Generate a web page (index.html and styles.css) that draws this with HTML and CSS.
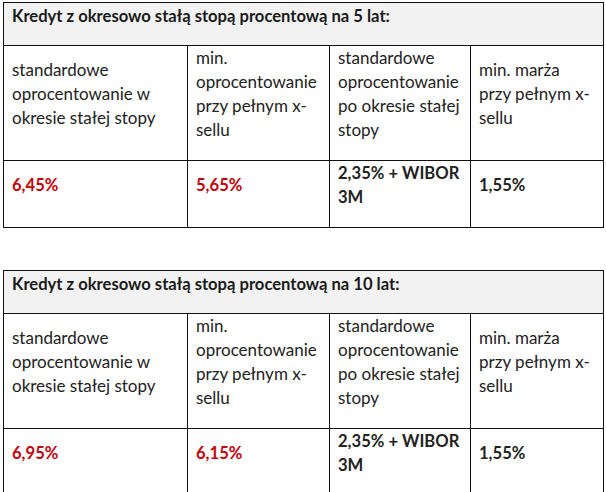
FILE: index.html
```html
<!DOCTYPE html>
<html lang="pl">
<head>
<meta charset="utf-8">
<link rel="stylesheet" href="styles.css">
</head>
<body>
<div class="page">
  <table class="rates">
    <colgroup>
      <col class="c1"><col class="c2"><col class="c3"><col class="c4">
    </colgroup>
    <tr><th colspan="4" class="head">Kredyt z okresowo stałą stopą procentową na 5 lat:</th></tr>
    <tr>
      <td>standardowe oprocentowanie w okresie stałej stopy</td>
      <td>min. oprocentowanie przy pełnym x-sellu</td>
      <td>standardowe oprocentowanie po okresie stałej stopy</td>
      <td class="last">min. marża przy pełnym x-sellu</td>
    </tr>
    <tr>
      <td class="red">6,45%</td>
      <td class="red">5,65%</td>
      <td class="strong">2,35% + WIBOR 3M</td>
      <td class="strong last">1,55%</td>
    </tr>
  </table>

  <table class="rates">
    <colgroup>
      <col class="c1"><col class="c2"><col class="c3"><col class="c4">
    </colgroup>
    <tr><th colspan="4" class="head">Kredyt z okresowo stałą stopą procentową na 10 lat:</th></tr>
    <tr>
      <td>standardowe oprocentowanie w okresie stałej stopy</td>
      <td>min. oprocentowanie przy pełnym x-sellu</td>
      <td>standardowe oprocentowanie po okresie stałej stopy</td>
      <td class="last">min. marża przy pełnym x-sellu</td>
    </tr>
    <tr>
      <td class="red">6,95%</td>
      <td class="red">6,15%</td>
      <td class="strong">2,35% + WIBOR 3M</td>
      <td class="strong last">1,55%</td>
    </tr>
  </table>
</div>
</body>
</html>
```

FILE: styles.css
```css
html, body {
  margin: 0;
  padding: 0;
  background: #ffffff;
}

body {
  font-family: Lato, "Open Sans", sans-serif;
  font-size: 17px;
  line-height: 24px;
  color: #222222;
}

.page {
  padding: 2px 3px 0 3px;
  display: flex;
  flex-direction: column;
  gap: 42px;
}

.rates {
  width: 600px;
  border-collapse: collapse;
  table-layout: fixed;
}

.c1 { width: 184px; }
.c2 { width: 142px; }
.c3 { width: 141px; }
.c4 { width: 133px; }

.rates th,
.rates td {
  border: 1px solid #111111;
  padding: 0 6px 18px 8px;
  vertical-align: middle;
  text-align: left;
}

.rates td.last {
  padding-right: 12px;
}

.rates .head {
  background: #f2f2f2;
  font-weight: 700;
  font-size: 16.6px;
  color: #1a1a1a;
  vertical-align: top;
  padding-top: 1px;
  padding-bottom: 17px;
}

.rates .red {
  color: #c8000a;
  font-weight: 700;
  font-size: 16.6px;
}

.rates .strong {
  font-weight: 700;
  font-size: 16.6px;
  color: #222222;
}
```
